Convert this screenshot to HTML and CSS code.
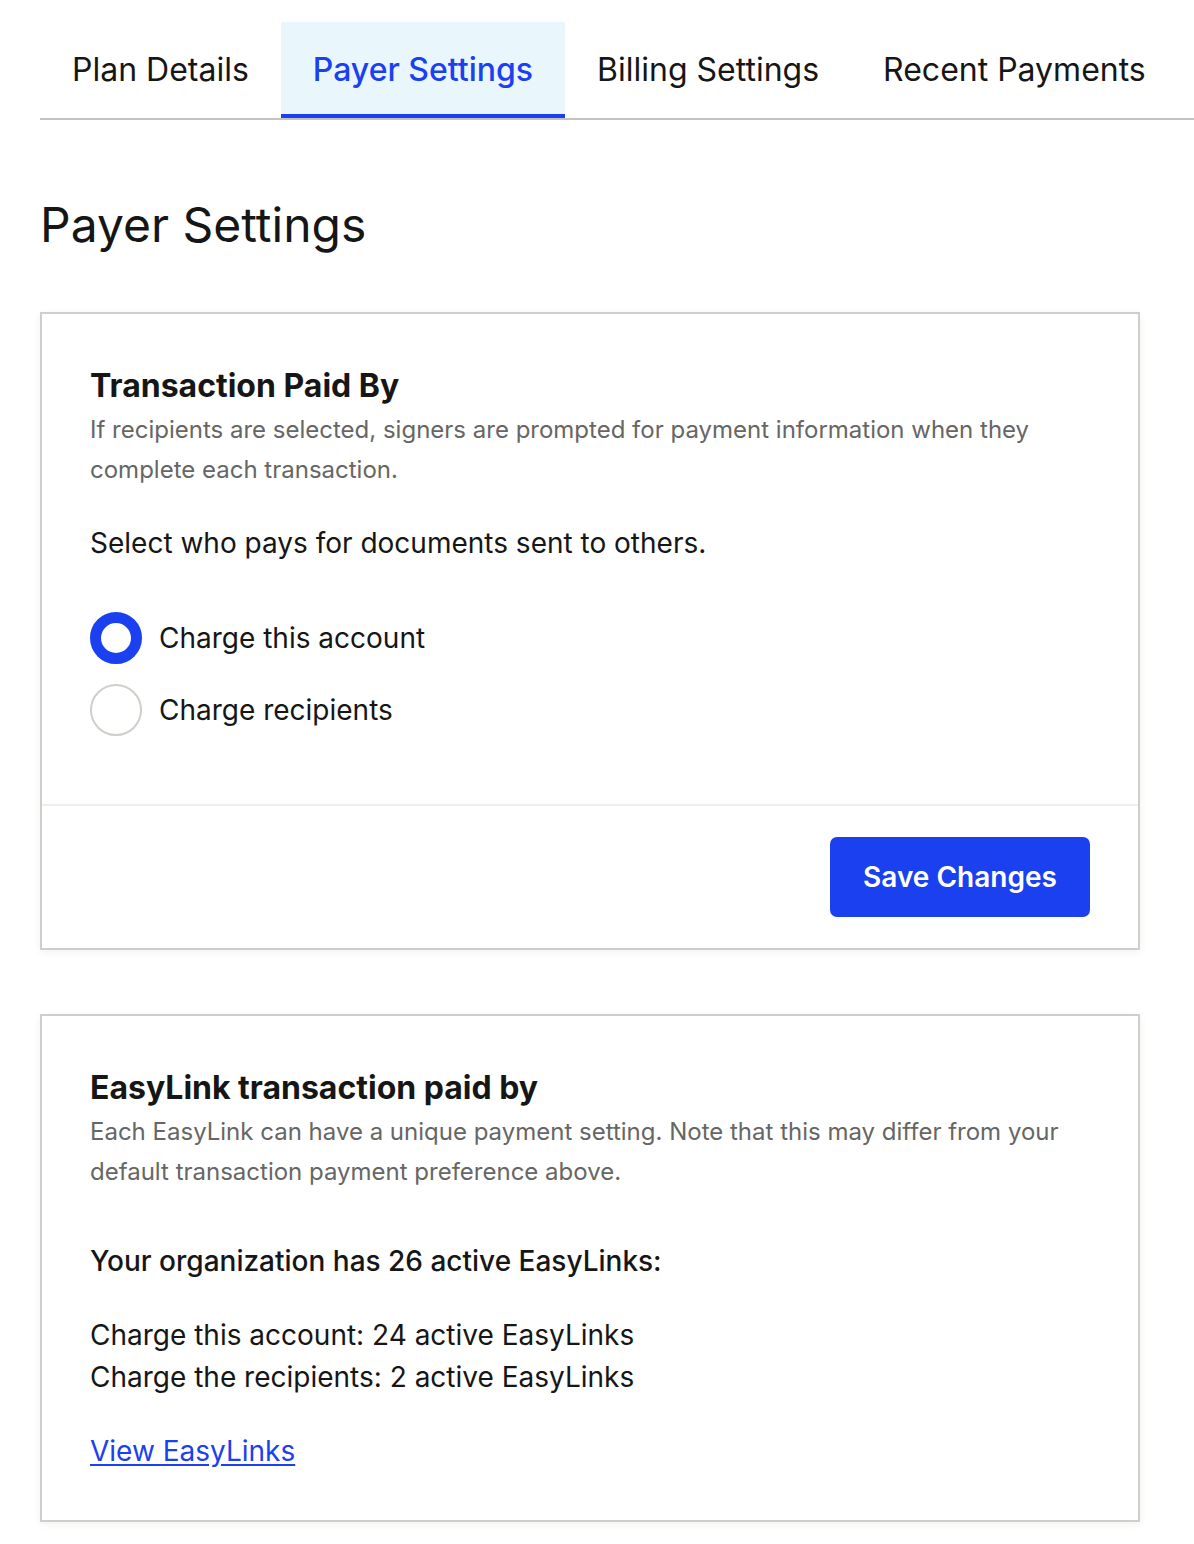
FILE: index.html
```html
<!DOCTYPE html>
<html lang="en">
<head>
<meta charset="utf-8">
<title>Payer Settings</title>
<link rel="stylesheet" href="styles.css">
</head>
<body>
<div class="page">
  <nav class="tabs">
    <a class="tab">Plan Details</a>
    <a class="tab active">Payer Settings</a>
    <a class="tab">Billing Settings</a>
    <a class="tab">Recent Payments</a>
  </nav>

  <main class="content">
    <h1 class="page-title">Payer Settings</h1>

    <section class="card">
      <div class="card-body">
        <h2 class="card-title">Transaction Paid By</h2>
        <p class="card-desc">If recipients are selected, signers are prompted for payment information when they complete each transaction.</p>
        <p class="prompt">Select who pays for documents sent to others.</p>
        <div class="radios">
          <label class="radio-row">
            <span class="radio checked"></span>
            <span class="radio-label">Charge this account</span>
          </label>
          <label class="radio-row">
            <span class="radio"></span>
            <span class="radio-label">Charge recipients</span>
          </label>
        </div>
      </div>
      <div class="card-footer">
        <button class="btn-primary">Save Changes</button>
      </div>
    </section>

    <section class="card">
      <div class="card-body card-body-last">
        <h2 class="card-title">EasyLink transaction paid by</h2>
        <p class="card-desc">Each EasyLink can have a unique payment setting. Note that this may differ from your default transaction payment preference above.</p>
        <p class="summary">Your organization has 26 active EasyLinks:</p>
        <div class="counts">
          <div>Charge this account: 24 active EasyLinks</div>
          <div>Charge the recipients: 2 active EasyLinks</div>
        </div>
        <a class="link" href="#">View EasyLinks</a>
      </div>
    </section>
  </main>
</div>
</body>
</html>
```

FILE: styles.css
```css
* { box-sizing: border-box; }

html, body {
  margin: 0;
  padding: 0;
  background: #ffffff;
}

body {
  font-family: Inter, "Noto Sans", "Liberation Sans", sans-serif;
  color: #161616;
}

.page {
  padding: 22px 0 0 40px;
}

.tabs {
  display: flex;
  border-bottom: 2px solid #c4c4bf;
}

.tab {
  display: block;
  padding: 0 32px;
  height: 96px;
  line-height: 96px;
  font-size: 32px;
  color: #161616;
  border-bottom: 4px solid transparent;
  cursor: pointer;
}

.tab.active {
  background: #e9f6fc;
  color: #1b40ef;
  border-bottom-color: #1b40ef;
  font-weight: 500;
  padding-top: 4px;
  line-height: 88px;
}

.content {
  width: 1100px;
}

.page-title {
  margin: 76px 0 58px;
  font-size: 48px;
  line-height: 58px;
  font-weight: 400;
  color: #161616;
}

.card {
  border: 2px solid #cfcfca;
  background: #fff;
  box-shadow: 0 2px 8px rgba(0, 0, 0, 0.06);
  margin-bottom: 64px;
}

.card-body {
  padding: 52px 48px 68px;
}

.card-body-last {
  padding-bottom: 48px;
}

.card-title {
  margin: 0;
  font-size: 32px;
  line-height: 40px;
  font-weight: 700;
  color: #161616;
}

.card-desc {
  margin: 4px 0 0;
  font-size: 24px;
  line-height: 40px;
  color: #666664;
}

.prompt {
  margin: 35px 0 0;
  font-size: 28px;
  line-height: 36px;
}

.radios {
  margin-top: 51px;
  display: flex;
  flex-direction: column;
  gap: 20px;
}

.radio-row {
  display: flex;
  align-items: center;
  gap: 17px;
  cursor: pointer;
}

.radio {
  width: 52px;
  height: 52px;
  border-radius: 50%;
  border: 2px solid #cfcfca;
  background: #fff;
  flex: none;
}

.radio.checked {
  border: 11px solid #1b40ef;
}

.radio-label {
  font-size: 28px;
  line-height: 36px;
}

.card-footer {
  border-top: 2px solid #efefeb;
  padding: 31px 48px 31px;
  display: flex;
  justify-content: flex-end;
}

.btn-primary {
  width: 260px;
  height: 80px;
  background: #1b40ef;
  color: #fff;
  border: none;
  border-radius: 7px;
  font-family: inherit;
  font-size: 28px;
  font-weight: 600;
  cursor: pointer;
}

.summary {
  margin: 51px 0 0;
  font-size: 28px;
  line-height: 36px;
  font-weight: 500;
}

.counts {
  margin-top: 35px;
  font-size: 28px;
  line-height: 42px;
}

.link {
  display: inline-block;
  margin-top: 32px;
  font-size: 28px;
  line-height: 42px;
  color: #1b40ef;
  text-decoration: underline;
  text-underline-offset: 3px;
}
```
